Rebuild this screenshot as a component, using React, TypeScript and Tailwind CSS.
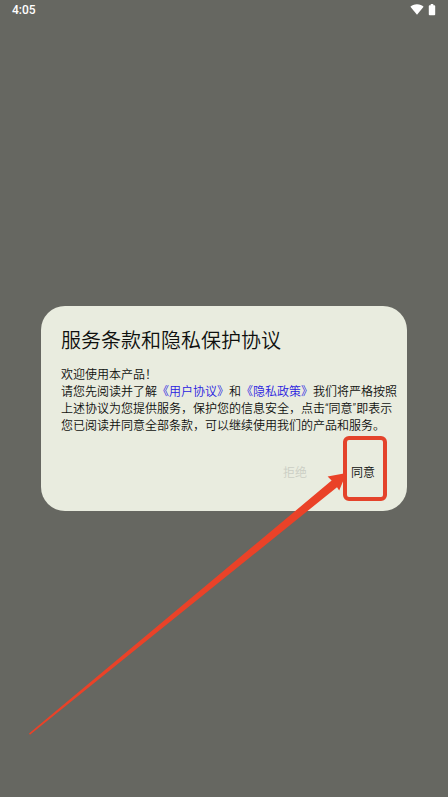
import { useState } from 'react'

/* ================== STATUS BAR ================== */
function StatusBar() {
  return (
    <header className="flex h-5 shrink-0 items-center justify-between pl-3 pr-3 text-white">
      <time className="text-xs font-medium">4:05</time>
      <div className="flex items-center gap-1">
        <svg width="14" height="12" viewBox="0 0 14 12" fill="currentColor" aria-hidden>
          <path d="M7 10.8 0.4 2.8C1.8 1 4.2 0.2 7 0.2s5.2 0.8 6.6 2.6L7 10.8Z" />
        </svg>
        <svg width="8" height="12" viewBox="0 0 8 12" fill="currentColor" aria-hidden>
          <path d="M2.7 0h2.6v1.2h1.1c.4 0 .8.4.8.8v8.4c0 .4-.4.8-.8.8H1.6c-.4 0-.8-.4-.8-.8V2c0-.4.4-.8.8-.8h1.1V0Z" />
        </svg>
      </div>
    </header>
  )
}

/* ================== RED FRAME + ARROW ================== */
function Highlight() {
  return (
    <div className="pointer-events-none absolute inset-0" aria-hidden>
      <div className="absolute -top-[19px] left-0 h-[65px] w-11 rounded-md border-4 border-[#e4432b]" />
      <svg
        className="absolute -left-[315px] top-[17px] max-w-none"
        width="320"
        height="264"
        viewBox="0 0 320 264"
        fill="#ea4228"
      >
        <path d="M1 261.6 303.6 8.6 299.6 4.6 318.5 1 311.2 18.4 309 15.2 2 262.8Z" />
      </svg>
    </div>
  )
}

export default function App() {
  const [open, setOpen] = useState(true)

  return (
    <div className="flex min-h-screen flex-col bg-[#666761] font-[Roboto,'Noto_Sans_CJK_SC',sans-serif]">
      <StatusBar />

      <main className="flex flex-1 items-center px-[41px]">
        {open && (
          <section
            role="dialog"
            aria-labelledby="dialog-title"
            lang="zh-CN"
            className="w-full rounded-[24px] bg-[#e9ecdf] pb-5 pt-[21px] font-[350] text-[#0f100e]"
          >
            <h1 id="dialog-title" className="px-5 text-xl/7 font-[350]">
              服务条款和隐私保护协议
            </h1>

            <p className="mt-3 pl-5 pr-2 text-xs/[17px]">
              欢迎使用本产品！
              <br />
              请您先阅读并了解<a href="#terms" className="text-[#2a22e0]">《用户协议》</a>和<a href="#privacy" className="text-[#2a22e0]">《隐私政策》</a>我们将严格按照
              <br />
              上述协议为您提供服务，保护您的信息安全，点击“同意”即表示
              <br />
              您已阅读并同意全部条款，可以继续使用我们的产品和服务。
            </p>

            <div className="mt-5 flex justify-end gap-7 pr-6 text-xs">
              <button type="button" className="h-9 w-10 text-[#cbcec4]">
                拒绝
              </button>
              <div className="relative">
                <button type="button" onClick={() => setOpen(false)} className="h-9 w-10">
                  同意
                </button>
                <Highlight />
              </div>
            </div>
          </section>
        )}
      </main>
    </div>
  )
}
